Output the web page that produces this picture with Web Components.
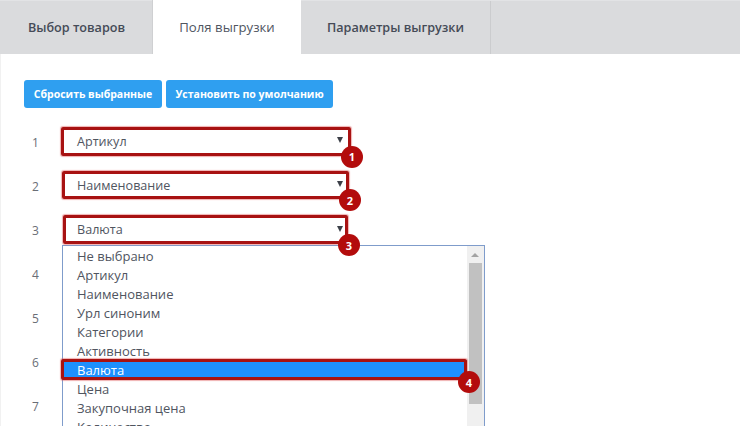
<!DOCTYPE html>
<html lang="ru">
<head>
<meta charset="utf-8">
<title>Поля выгрузки</title>
<style>
    html, body{
        margin: 0;
        height: 426px;
        overflow: hidden;
        background: #fff;
        font-family: "Open Sans", "Liberation Sans", sans-serif;
    }
</style>
</head>
<body>

<export-tabs>
    <export-tab>Выбор товаров</export-tab>
    <export-tab active>Поля выгрузки</export-tab>
    <export-tab wide>Параметры выгрузки</export-tab>
</export-tabs>

<export-panel>
    <div slot="buttons" style="display:flex; gap:4px">
        <export-button w="138">Сбросить выбранные</export-button>
        <export-button w="167">Установить по умолчанию</export-button>
    </div>

    <export-row num="1" style="--x:64px; --w:284px; --h:23px; --top:-2px; --c:5px">
        <export-select mark="1">Артикул</export-select>
    </export-row>
    <export-row num="2" style="--x:65px; --w:281px; --h:22px; --top:-2px; --c:3px">
        <export-select mark="2">Наименование</export-select>
    </export-row>
    <export-row num="3" style="--x:66px; --w:279px; --h:23px; --top:-1px; --c:2px">
        <export-select mark="3">Валюта</export-select>
        <export-list>
            <export-option>Не выбрано</export-option>
            <export-option>Артикул</export-option>
            <export-option>Наименование</export-option>
            <export-option>Урл синоним</export-option>
            <export-option>Категории</export-option>
            <export-option>Активность</export-option>
            <export-option selected mark="4">Валюта</export-option>
            <export-option>Цена</export-option>
            <export-option>Закупочная цена</export-option>
            <export-option>Количество</export-option>
        </export-list>
    </export-row>
    <export-row num="4"></export-row>
    <export-row num="5"></export-row>
    <export-row num="6"></export-row>
    <export-row num="7"></export-row>
</export-panel>

<script>
class ExportTabs extends HTMLElement {
    constructor(){
        super()
        this.attachShadow({mode: 'open'}).innerHTML = `
            <style>
                :host{
                    display: flex;
                    height: 53px;
                    padding-left: 1px;
                    background-color: #dadbdd;
                    border-top: 1px solid #e2e3e5;
                }
            </style>
            <slot></slot>
        `
    }
}
customElements.define('export-tabs', ExportTabs)

class ExportTab extends HTMLElement {
    constructor(){
        super()
        this.attachShadow({mode: 'open'}).innerHTML = `
            <style>
                :host{
                    display: flex;
                    align-items: center;
                    justify-content: center;
                    box-sizing: border-box;
                    width: 151px;
                    height: 53px;
                    padding-bottom: 1px;
                    color: #454b57;
                    font-size: 12.6px;
                    font-weight: 600;
                }
                :host([active]){
                    width: 149px;
                    height: 54px;
                    margin-top: -1px;
                    padding-bottom: 0;
                    background-color: #fff;
                    font-weight: 400;
                    font-size: 13.2px;
                    color: #50555f;
                    border-left: 1px solid #cfd0d2;
                }
                :host([wide]){
                    width: 190px;
                    border-right: 1px solid #cbccce;
                }
            </style>
            <slot></slot>
        `
    }
}
customElements.define('export-tab', ExportTab)

class ExportPanel extends HTMLElement {
    constructor(){
        super()
        this.attachShadow({mode: 'open'}).innerHTML = `
            <style>
                :host{
                    display: block;
                    padding: 26px 24px 0 23px;
                    border-left: 1px solid #f1f1f1;
                }
                .buttons{
                    margin-bottom: 12px;
                }
            </style>
            <div class="buttons"><slot name="buttons"></slot></div>
            <slot></slot>
        `
    }
}
customElements.define('export-panel', ExportPanel)

class ExportButton extends HTMLElement {
    constructor(){
        super()
        this.attachShadow({mode: 'open'}).innerHTML = `
            <style>
                :host{
                    display: flex;
                    align-items: center;
                    justify-content: center;
                    box-sizing: border-box;
                    width: ${this.getAttribute('w')}px;
                    height: 28px;
                    background-color: #2f9ff0;
                    border-radius: 3px;
                    color: #fff;
                    font-size: 10.5px;
                    font-weight: 700;
                }
            </style>
            <slot></slot>
        `
    }
}
customElements.define('export-button', ExportButton)

class ExportRow extends HTMLElement {
    constructor(){
        super()
        this.attachShadow({mode: 'open'}).innerHTML = `
            <style>
                :host{
                    display: flex;
                    align-items: center;
                    position: relative;
                    height: 44px;
                    color: #6a6e76;
                    font-size: 12px;
                }
                .num{
                    position: absolute;
                    left: 8px;
                }
                .field{
                    margin-left: calc(var(--x, 62px) - 24px);
                    flex: none;
                }
            </style>
            <span class="num">${this.getAttribute('num')}</span>
            <div class="field"><slot></slot></div>
        `
    }
}
customElements.define('export-row', ExportRow)

class ExportSelect extends HTMLElement {
    constructor(){
        super()
        this.attachShadow({mode: 'open'}).innerHTML = `
            <style>
                :host{
                    display: flex;
                    align-items: center;
                    position: relative;
                    box-sizing: border-box;
                    width: var(--w);
                    height: var(--h);
                    margin-top: var(--top);
                    padding-left: calc(77px - var(--x));
                    color: #50555f;
                    font-size: 12.6px;
                    background: #fff;
                }
                .frame{
                    position: absolute;
                    inset: -3px;
                    border: 3px solid #a81212;
                    border-radius: 2px;
                    box-shadow: 0 0 1px 1px rgba(220, 80, 80, .45);
                    z-index: 3;
                }
                svg{
                    position: absolute;
                    right: var(--c);
                    top: 50%;
                    margin-top: -4px;
                }
                export-badge{
                    position: absolute;
                    right: -15px;
                    bottom: -15px;
                    z-index: 4;
                }
            </style>
            <slot></slot>
            <svg width="6" height="6" viewBox="0 0 6 6"><polygon points="0,0 6,0 3,6" fill="#3c4048"/></svg>
            <div class="frame"></div>
            <export-badge>${this.getAttribute('mark')}</export-badge>
        `
    }
}
customElements.define('export-select', ExportSelect)

class ExportBadge extends HTMLElement {
    constructor(){
        super()
        this.attachShadow({mode: 'open'}).innerHTML = `
            <style>
                :host{
                    display: flex;
                    align-items: center;
                    justify-content: center;
                    width: 22px;
                    height: 22px;
                    border-radius: 50%;
                    background-color: #b30c0c;
                    color: #fff;
                    font-size: 11px;
                    font-weight: 700;
                    font-family: "Open Sans", "Liberation Sans", sans-serif;
                }
            </style>
            <slot></slot>
        `
    }
}
customElements.define('export-badge', ExportBadge)

class ExportList extends HTMLElement {
    constructor(){
        super()
        this.attachShadow({mode: 'open'}).innerHTML = `
            <style>
                :host{
                    display: block;
                    position: absolute;
                    left: 38px;
                    top: 37px;
                    width: 423px;
                    height: 200px;
                    box-sizing: border-box;
                    border: 1px solid #7f9ccb;
                    background: #fff;
                    z-index: 1;
                }
                .scroll{
                    position: absolute;
                    right: 0;
                    top: 0;
                    bottom: 0;
                    width: 17px;
                    background: #f0f0f0;
                }
                .up{
                    position: absolute;
                    left: 4px;
                    top: 7px;
                    width: 0;
                    height: 0;
                    border: 4px solid transparent;
                    border-top: 0;
                    border-bottom: 4px solid #a3a3a3;
                }
                .thumb{
                    position: absolute;
                    left: 2px;
                    right: 2px;
                    top: 17px;
                    height: 141px;
                    background: #c1c1c1;
                }
            </style>
            <slot></slot>
            <div class="scroll"><div class="up"></div><div class="thumb"></div></div>
        `
    }
}
customElements.define('export-list', ExportList)

class ExportOption extends HTMLElement {
    constructor(){
        super()
        const mark = this.getAttribute('mark')
        this.attachShadow({mode: 'open'}).innerHTML = `
            <style>
                :host{
                    display: flex;
                    align-items: center;
                    position: relative;
                    box-sizing: border-box;
                    width: 404px;
                    height: 19px;
                    padding-left: 14px;
                    color: #50555f;
                    font-size: 13px;
                    white-space: nowrap;
                }
                :host([selected]){
                    background-color: #1e90ff;
                    color: #fff;
                    z-index: 2;
                }
                .frame{
                    position: absolute;
                    inset: -1px 0 -1px -2px;
                    border: 3px solid #a81212;
                    border-radius: 2px;
                    box-shadow: 0 0 1px 1px rgba(220, 80, 80, .45);
                }
                export-badge{
                    position: absolute;
                    right: -13px;
                    bottom: -14px;
                    z-index: 4;
                }
            </style>
            <slot></slot>
            ${mark ? `<div class="frame"></div><export-badge>${mark}</export-badge>` : ''}
        `
    }
}
customElements.define('export-option', ExportOption)
</script>
</body>
</html>
